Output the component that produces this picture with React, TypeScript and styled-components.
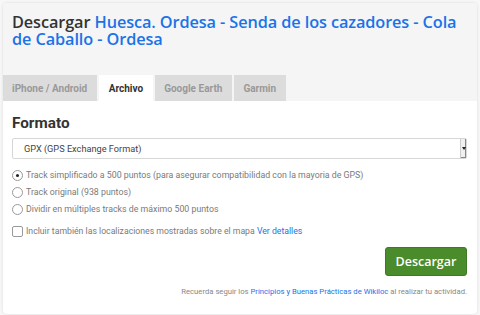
import { createGlobalStyle, styled } from 'styled-components';

const GlobalStyle = createGlobalStyle`
  body {
    margin: 0;
    background: #f7f7f7;
    font-family: Roboto, "Liberation Sans", sans-serif;
  }
`;

const TABS = ['iPhone / Android', 'Archivo', 'Google Earth', 'Garmin'];
const ACTIVE_TAB = 'Archivo';

const OPTIONS = [
  { label: 'Track simplificado a 500 puntos (para asegurar compatibilidad con la mayoria de GPS)', checked: true },
  { label: 'Track original (938 puntos)', checked: false },
  { label: 'Dividir en múltiples tracks de máximo 500 puntos', checked: false },
];

const App = () => {
  return (
    <>
      <GlobalStyle />
      <Page>
        <Card>
          <CardHeader>
            <Title>
              Descargar <TitleLink>Huesca. Ordesa - Senda de los cazadores - Cola de Caballo - Ordesa</TitleLink>
            </Title>
            <Tabs>
              {TABS.map((tab) => (
                <Tab key={tab} $active={tab === ACTIVE_TAB}>{tab}</Tab>
              ))}
            </Tabs>
          </CardHeader>

          <CardBody>
            <SectionTitle>Formato</SectionTitle>
            <Select>
              <span>GPX (GPS Exchange Format)</span>
              <SelectArrow>
                <svg width="4" height="3" viewBox="0 0 4 3">
                  <path d="M0 0 L4 0 L2 3 Z" fill="#222" />
                </svg>
              </SelectArrow>
            </Select>

            <OptionList>
              {OPTIONS.map((opt) => (
                <OptionRow key={opt.label}>
                  <Radio $checked={opt.checked} />
                  <span>{opt.label}</span>
                </OptionRow>
              ))}
            </OptionList>

            <CheckRow>
              <Checkbox />
              <span>
                Incluir también las localizaciones mostradas sobre el mapa <Link>Ver detalles</Link>
              </span>
            </CheckRow>

            <Actions>
              <DownloadButton>Descargar</DownloadButton>
            </Actions>

            <Footnote>
              Recuerda seguir los <Link>Principios y Buenas Prácticas de Wikiloc</Link> al realizar tu actividad.
            </Footnote>
          </CardBody>
        </Card>
      </Page>
    </>
  );
};

export default App;

const Page = styled.div`
  padding: 3px 3px 2px 3px;
`;

const Card = styled.div`
  background: #fff;
  border-radius: 4px;
  box-shadow: 0 0 3px rgba(0, 0, 0, 0.12);
  overflow: hidden;
`;

const CardHeader = styled.div`
  background: #f5f5f5;
  padding-top: 11px;
`;

const Title = styled.h1`
  margin: 0 0 0 9px;
  padding-right: 6px;
  font-family: "Open Sans", "DejaVu Sans", sans-serif;
  font-weight: 600;
  font-size: 16.3px;
  letter-spacing: -0.1px;
  line-height: 16.5px;
  color: #333;
  height: 61px;
`;

const TitleLink = styled.a`
  color: #1a73e8;
  text-decoration: none;
`;

const Tabs = styled.div`
  display: flex;
  gap: 2px;
  height: 26px;
`;

const Tab = styled.div<{ $active?: boolean }>`
  display: flex;
  align-items: center;
  padding: 0 9.5px;
  background: ${(p) => (p.$active ? '#fff' : '#dcdcdc')};
  color: ${(p) => (p.$active ? '#333' : '#999')};
  font-weight: 700;
  font-size: 10px;
  &:first-child {
    padding: 0 10px 0 9px;
  }
`;

const CardBody = styled.div`
  padding: 12px 10px 17px 9px;
`;

const SectionTitle = styled.h2`
  margin: 0;
  font-weight: 700;
  font-size: 15.3px;
  line-height: 20px;
  color: #333;
`;

const Select = styled.div`
  margin-top: 5px;
  height: 21px;
  display: flex;
  align-items: center;
  justify-content: space-between;
  border: 1px solid #d7d7d7;
  border-radius: 2px;
  padding-left: 11px;
  font-size: 9.2px;
  color: #444;
  box-sizing: border-box;
`;

const SelectArrow = styled.div`
  width: 5px;
  height: 19px;
  display: flex;
  align-items: center;
  justify-content: center;
  background: #f0f0f0;
  border-left: 1px solid #ccc;
  box-shadow: inset -1px -1px 0 #888;
`;

const OptionList = styled.div`
  margin-top: 10px;
  display: flex;
  flex-direction: column;
  gap: 5px;
`;

const OptionRow = styled.label`
  display: flex;
  align-items: center;
  gap: 3px;
  font-size: 8.8px;
  line-height: 12px;
  color: #7a7a7a;
  white-space: nowrap;
`;

const Radio = styled.span<{ $checked?: boolean }>`
  width: 9px;
  height: 9px;
  border-radius: 50%;
  border: 1px solid #999;
  background: #fff;
  display: inline-flex;
  align-items: center;
  justify-content: center;
  &::after {
    content: '';
    width: 3px;
    height: 3px;
    border-radius: 50%;
    background: ${(p) => (p.$checked ? '#222' : 'transparent')};
  }
`;

const CheckRow = styled(OptionRow)`
  margin-top: 10px;
  font-size: 8.7px;
`;

const Checkbox = styled.span`
  width: 9px;
  height: 9px;
  border: 1px solid #999;
  border-radius: 2px;
  background: #fff;
`;

const Link = styled.a`
  color: #1a73e8;
  text-decoration: none;
`;

const Actions = styled.div`
  display: flex;
  justify-content: flex-end;
  margin-top: 10px;
`;

const DownloadButton = styled.button`
  width: 82px;
  height: 29px;
  background: #4a8b2c;
  border: 1px solid #3f7924;
  border-radius: 3px;
  color: #fff;
  font-family: "Open Sans", "DejaVu Sans", sans-serif;
  font-weight: 600;
  font-size: 12.5px;
  padding: 0;
`;

const Footnote = styled.p`
  margin: 11px 0 0 0;
  text-align: right;
  font-size: 7.7px;
  line-height: 10px;
  color: #888;
`;
